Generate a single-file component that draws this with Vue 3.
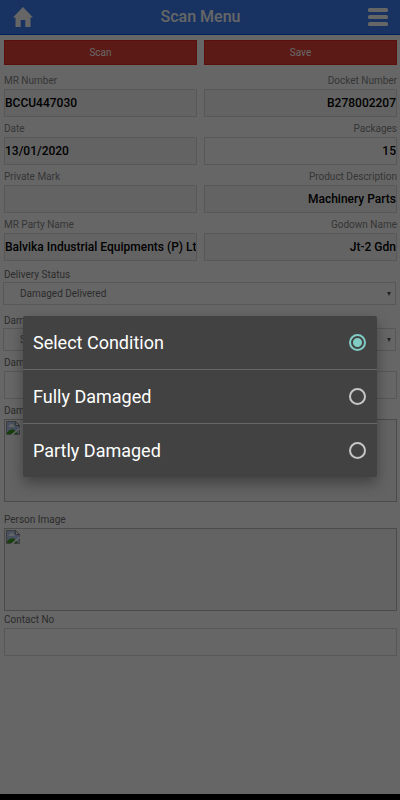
<script setup>
import { ref } from 'vue'

const fields = [
  { id: 'mr', label: 'MR Number', value: 'BCCU447030', locked: true },
  { id: 'docket', label: 'Docket Number', value: 'B278002207', locked: true },
  { id: 'date', label: 'Date', value: '13/01/2020', locked: true },
  { id: 'packages', label: 'Packages', value: '15', locked: false },
  { id: 'mark', label: 'Private Mark', value: '', locked: true },
  { id: 'product', label: 'Product Description', value: 'Machinery Parts', locked: true },
  { id: 'party', label: 'MR Party Name', value: 'Balvika Industrial Equipments (P) Ltd', locked: true },
  { id: 'godown', label: 'Godown Name', value: 'Jt-2 Gdn', locked: true }
]
const options = ['Select Condition', 'Fully Damaged', 'Partly Damaged']
const condition = ref('Select Condition')
</script>

<template>
  <div class="screen">
    <div class="page">
      <header class="bar">
        <button class="icon" type="button" aria-label="Home">
          <svg width="20" height="20" viewBox="0 0 20 20"><path d="M10 0 20 10.5H17.5V20H12.3V13H7.700V20H2.500V10.500H0Z" /></svg>
        </button>
        <h1>Scan Menu</h1>
        <button class="icon" type="button" aria-label="Menu">
          <svg width="20" height="18" viewBox="0 0 20 18"><rect width="20" height="4" rx="1.5" /><rect y="7" width="20" height="4" rx="1.5" /><rect y="14" width="20" height="4" rx="1.5" /></svg>
        </button>
      </header>
      <main>
        <div class="actions">
          <button type="button">Scan</button>
          <button type="button">Save</button>
        </div>
        <div class="grid">
          <div v-for="f in fields" :key="f.id" class="field">
            <label :for="f.id">{{ f.label }}</label>
            <input :id="f.id" type="text" :value="f.value" :readonly="f.locked" :class="{ locked: f.locked }">
          </div>
        </div>
        <div class="choices">
          <div class="field wide">
            <label for="status">Delivery Status</label>
            <div class="select"><select id="status"><option>Damaged Delivered</option></select></div>
          </div>
          <div class="field wide">
            <label for="condition">Damage Condition</label>
            <div class="select"><select id="condition" v-model="condition"><option v-for="o in options" :key="o">{{ o }}</option></select></div>
          </div>
        </div>
        <div class="field wide">
          <label for="damaged">Damaged Packages</label>
          <input id="damaged" type="text">
        </div>
        <div class="photos">
          <div v-for="name in ['Damage Image', 'Person Image']" :key="name">
            <span class="caption">{{ name }}</span>
            <div class="frame" role="img" :aria-label="name">
              <svg width="14" height="14" viewBox="0 0 14 14">
                <path d="M.5.5H9.5L13.5 4.5V13.5H.5Z" fill="#b4cbf5" />
                <path d="M2.500 6q0-2 1.500-2 .5-1.500 2-1 1.500 0 1.500 1.500 1.500 0 1 1.500Z" fill="#fff" />
                <path d="M1 13V11.500Q4 7.500 8 8.500L12 13Z" fill="#3f9f24" />
                <path d="M13.500 6.500V8L7.500 13.500H5Z" fill="#fff" />
                <path d="M5 13.500H.5V.5H9.500L13.500 4.500V6.500M13.500 9V13.500H8" fill="none" stroke="#999" />
                <path d="M9.500.5V4.500H13.500Z" fill="#fff" stroke="#888" />
              </svg>
            </div>
          </div>
        </div>
        <div class="field wide contact">
          <label for="contact">Contact No</label>
          <input id="contact" type="tel">
        </div>
      </main>
    </div>
    <div class="overlay">
      <div class="dialog" role="dialog" aria-modal="true" aria-label="Condition">
        <label v-for="o in options" :key="o" class="option">
          <span>{{ o }}</span>
          <input v-model="condition" type="radio" name="condition" :value="o">
        </label>
      </div>
    </div>
    <div class="system"></div>
  </div>
</template>

<style>
body { background: #000; }
</style>

<style scoped>
* { box-sizing: border-box; }
.screen {
  position: relative;
  display: flex;
  flex-direction: column;
  min-height: 100vh;
  font-family: Roboto, "Liberation Sans", sans-serif;
}
.page { flex: 1; background: #fff; }
.system { height: 6px; background: #000; }
.bar {
  display: flex;
  align-items: center;
  justify-content: space-between;
  height: 35px;
  padding: 0 12px 0 13px;
  background: #3c7ef3;
  border-bottom: 1px solid #0a55d8;
}
h1 { margin: 0; font-size: 16px; line-height: 20px; font-weight: 500; color: #fff; }
button { border: 0; padding: 0; font-family: inherit; }
.icon { display: flex; background: none; fill: #fff; }
main { padding: 5px 3px 0 4px; }
.actions, .grid { display: grid; grid-template-columns: 1fr 1fr; column-gap: 7px; }
.actions { margin-bottom: 4px; }
.grid { margin-bottom: 1px; }
.actions button {
  height: 25px;
  font-size: 10px;
  font-weight: 400;
  color: #fff;
  background: #e64337;
  border: 1px solid #e0281c;
}
.field { display: flex; flex-direction: column; min-width: 0; }
label, .caption { font-size: 10px; line-height: 12px; color: #888; }
.field label { height: 20px; padding-top: 6px; }
.field input {
  width: 100%;
  height: 28px;
  padding: 0;
  border: 1px solid #ddd;
  border-radius: 0;
  background: #fff;
  font: 500 12px Roboto, "Liberation Sans", sans-serif;
  color: #000;
  outline: 0;
}
.field input.locked { background: #f7f7f7; }
.grid .field:nth-child(even) { text-align: right; }
.grid .field:nth-child(even) input { text-align: right; }
.wide label, .caption { color: #707070; }
.choices { display: grid; row-gap: 3px; }
.choices label { padding-top: 7px; }
.select { position: relative; margin: 0 1px 0 -1px; }
.select::after {
  content: "";
  position: absolute;
  right: 5px;
  top: 10px;
  border: 2px solid transparent;
  border-top: 4px solid #555;
  border-bottom: 0;
}
select {
  display: block;
  width: 100%;
  height: 23px;
  padding: 0 16px;
  appearance: none;
  border: 1px solid #ddd;
  border-radius: 0;
  background: #fff;
  font: 10px Roboto, "Liberation Sans", sans-serif;
  color: #707070;
}
.photos { display: grid; row-gap: 6px; }
.caption { display: block; height: 20px; padding-top: 6px; }
.frame { height: 83px; padding: 1px; border: 1px solid #bbb; background: #f7f7f7; }
.frame svg { display: block; }
.contact label { height: 17px; padding-top: 3px; }
.overlay {
  position: absolute;
  inset: 0 0 6px;
  display: flex;
  align-items: center;
  padding: 0 23px 1px;
  background: rgba(0, 0, 0, 0.6);
}
.dialog {
  flex: 1;
  border-radius: 2px;
  background: #424242;
  box-shadow: 0 6px 14px rgba(0, 0, 0, 0.35);
}
.option {
  display: flex;
  align-items: center;
  justify-content: space-between;
  height: 53px;
  padding: 0 11px 0 10px;
  font-size: 18px;
  line-height: 24px;
  color: #fff;
}
.option + .option { height: 54px; border-top: 1px solid #676767; }
.option input {
  appearance: none;
  width: 17px;
  height: 17px;
  margin: 0;
  border: 2px solid #c6c6c6;
  border-radius: 50%;
}
.option input:checked {
  border-color: #80cbc4;
  background: radial-gradient(circle, #80cbc4 4px, transparent 5px);
}
</style>
